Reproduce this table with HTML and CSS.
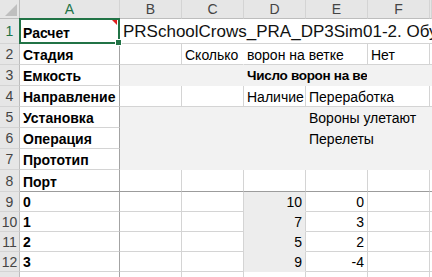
FILE: index.html
```html
<!DOCTYPE html>
<html lang="ru">
<head>
  <meta charset="UTF-8" />
  <meta name="viewport" content="width=device-width, initial-scale=1.0"/>
  <title>PRSchoolCrows</title>
  <link rel="stylesheet" href="styles.css">
</head>
<body>

  <div class="sheet">
    <!-- column headers -->
    <div class="corner"><span class="corner-mark"></span></div>
    <div class="col-head active">A</div>
    <div class="col-head">B</div>
    <div class="col-head">C</div>
    <div class="col-head">D</div>
    <div class="col-head">E</div>
    <div class="col-head">F</div>
    <div class="col-head"></div>

    <!-- 1 -->
    <div class="row-head active">1</div>
    <div class="cell key selected">Расчет<span class="comment"></span><span class="handle"></span></div>
    <div class="cell title span-6">PRSchoolCrows_PRA_DP3Sim01-2. Обучение</div>

    <!-- 2 -->
    <div class="row-head">2</div>
    <div class="cell key">Стадия</div>
    <div class="cell"></div>
    <div class="cell no-r">Сколько</div>
    <div class="cell span-2">ворон на ветке</div>
    <div class="cell">Нет</div>
    <div class="cell"></div>

    <!-- 3 -->
    <div class="row-head">3</div>
    <div class="cell key">Емкость</div>
    <div class="cell fill span-2"></div>
    <div class="cell fill caption span-2">Число ворон на ветке</div>
    <div class="cell fill span-2"></div>

    <!-- 4 -->
    <div class="row-head">4</div>
    <div class="cell key">Направление</div>
    <div class="cell"></div>
    <div class="cell"></div>
    <div class="cell">Наличие</div>
    <div class="cell span-2">Переработка</div>
    <div class="cell"></div>

    <!-- 5 -->
    <div class="row-head">5</div>
    <div class="cell key">Установка</div>
    <div class="cell fill span-3"></div>
    <div class="cell fill span-3">Вороны улетают</div>

    <!-- 6 -->
    <div class="row-head">6</div>
    <div class="cell key">Операция</div>
    <div class="cell fill span-3"></div>
    <div class="cell fill span-3">Перелеты</div>

    <!-- 7 -->
    <div class="row-head">7</div>
    <div class="cell key">Прототип</div>
    <div class="cell fill span-6"></div>

    <!-- 8 -->
    <div class="row-head">8</div>
    <div class="cell key rule">Порт</div>
    <div class="cell rule"></div>
    <div class="cell rule"></div>
    <div class="cell rule"></div>
    <div class="cell rule"></div>
    <div class="cell rule"></div>
    <div class="cell rule"></div>

    <!-- 9 -->
    <div class="row-head">9</div>
    <div class="cell key">0</div>
    <div class="cell"></div>
    <div class="cell"></div>
    <div class="cell num shade">10</div>
    <div class="cell num">0</div>
    <div class="cell"></div>
    <div class="cell"></div>

    <!-- 10 -->
    <div class="row-head">10</div>
    <div class="cell key">1</div>
    <div class="cell"></div>
    <div class="cell"></div>
    <div class="cell num shade">7</div>
    <div class="cell num">3</div>
    <div class="cell"></div>
    <div class="cell"></div>

    <!-- 11 -->
    <div class="row-head">11</div>
    <div class="cell key">2</div>
    <div class="cell"></div>
    <div class="cell"></div>
    <div class="cell num shade">5</div>
    <div class="cell num">2</div>
    <div class="cell"></div>
    <div class="cell"></div>

    <!-- 12 -->
    <div class="row-head">12</div>
    <div class="cell key">3</div>
    <div class="cell"></div>
    <div class="cell"></div>
    <div class="cell num shade">9</div>
    <div class="cell num">-4</div>
    <div class="cell"></div>
    <div class="cell"></div>

    <!-- 13, only its top edge shows -->
    <div class="row-head"></div>
    <div class="cell key"></div>
    <div class="cell"></div>
    <div class="cell"></div>
    <div class="cell"></div>
    <div class="cell"></div>
    <div class="cell"></div>
    <div class="cell"></div>
  </div>

</body>
</html>
```

FILE: styles.css
```css
:root {
  --grid: #d4d4d4;
  --head-bg: #e6e6e6;
  --head-line: #bdbdbd;
  --head-text: #444;
  --green: #217346;
  --fill: #f2f2f2;
  --shade: #ededed;
  --edge: #a3a3a3;
}

body {
  margin: 0;
  padding: 0;
  background: #fff;
  font-family: 'Liberation Sans', Arial, sans-serif;
  font-size: 14px;
  color: #000;
  overflow: hidden;
}

.sheet {
  display: grid;
  grid-template-columns: 20px 100px 62px 62px 62px 62px 62px 2px;
  grid-template-rows: 19px 25px 21px 21px 21px 21px 21px 21px 22px 20px 20px 20px 20px 20px;
  height: 277px;
  overflow: hidden;
}

/* headers */
.corner,
.col-head,
.row-head {
  box-sizing: border-box;
  background: var(--head-bg);
  color: var(--head-text);
  display: flex;
  align-items: center;
  justify-content: center;
  line-height: 1;
}

.corner {
  border-right: 1px solid var(--head-line);
  border-bottom: 1px solid var(--head-line);
  align-items: flex-end;
  justify-content: flex-end;
  padding: 0 2px 2px 0;
}

.corner-mark {
  width: 0;
  height: 0;
  border-left: 12px solid transparent;
  border-bottom: 12px solid #bfbfbf;
}

.col-head {
  border-right: 1px solid var(--grid);
  border-bottom: 1px solid var(--head-line);
}

.row-head {
  border-right: 1px solid var(--head-line);
  border-bottom: 1px solid var(--grid);
}

.col-head.active,
.row-head.active {
  color: var(--green);
}

/* cells */
.cell {
  box-sizing: border-box;
  border-right: 1px solid var(--grid);
  border-bottom: 1px solid var(--grid);
  display: flex;
  align-items: flex-end;
  padding: 0 3px 1px;
  line-height: 16px;
  white-space: nowrap;
  overflow: hidden;
}

.span-2 { grid-column: span 2; }
.span-3 { grid-column: span 3; }
.span-6 { grid-column: span 6; }

.no-r { border-right-color: transparent; }

.key {
  font-weight: bold;
  border-right-color: var(--edge);
}

.caption {
  font-weight: bold;
  font-size: 13.5px;
  letter-spacing: -0.3px;
}

.title {
  font-size: 17px;
  line-height: 19px;
  padding-bottom: 2px;
  border-right: none;
  color: #111;
}

.fill {
  background: var(--fill);
  border-color: transparent;
}

.shade {
  background: var(--shade);
  border-bottom-color: transparent;
}

.num {
  justify-content: flex-end;
  font-weight: normal;
  padding-bottom: 1px;
}

.rule {
  border-bottom-color: #9c9c9c;
}

/* active cell A1 */
.selected {
  position: relative;
  overflow: visible;
  padding-bottom: 2px;
}

.selected::after {
  content: "";
  position: absolute;
  left: -1px;
  top: -1px;
  right: -1px;
  bottom: -1px;
  border: 2px solid var(--green);
}

.comment {
  position: absolute;
  top: 1px;
  right: 2px;
  width: 0;
  height: 0;
  border-left: 5px solid transparent;
  border-top: 5px solid #e02020;
}

.handle {
  position: absolute;
  right: -3px;
  bottom: -3px;
  width: 5px;
  height: 5px;
  background: var(--green);
  border: 1px solid #fff;
  z-index: 2;
}
```
